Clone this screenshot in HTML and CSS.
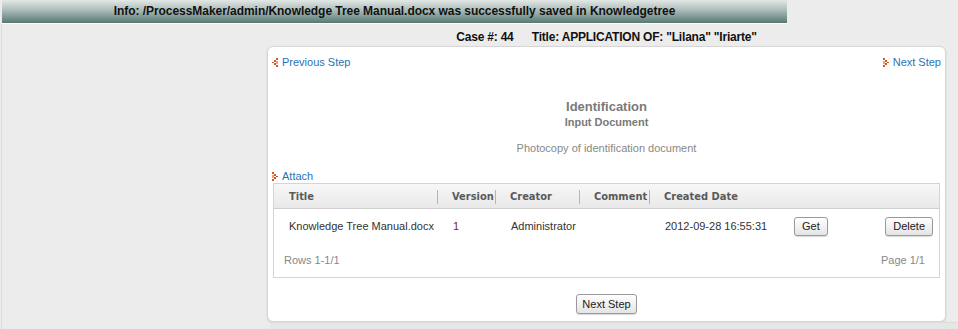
FILE: index.html
```html
<!DOCTYPE html>
<html>
<head>
  <title>Input Document</title>
  <link rel="stylesheet" href="styles.css">
</head>
<body>
  <div class="infobar">Info: /ProcessMaker/admin/Knowledge Tree Manual.docx was successfully saved in Knowledgetree</div>

  <div class="page">
    <div class="main">
      <div class="casebar">
        <span>Case #: 44</span>
        <span>Title: APPLICATION OF: "Lilana" "Iriarte"</span>
      </div>

      <div class="panel">
        <div class="steps">
          <a href="#" class="steplink">
            <svg class="arrow" width="6" height="9" viewBox="0 0 6 9"><g fill="#d9541e"><rect x="4" y="0" width="2" height="2"/><rect x="2" y="2" width="2" height="2"/><rect x="0" y="4" width="2" height="1"/><rect x="2" y="5" width="2" height="2"/><rect x="4" y="7" width="2" height="2"/><rect x="4" y="3" width="2" height="3" fill="#f0a070"/></g></svg>
            Previous Step
          </a>
          <a href="#" class="steplink">
            <svg class="arrow" width="6" height="9" viewBox="0 0 6 9"><g fill="#d9541e"><rect x="0" y="0" width="2" height="2"/><rect x="2" y="2" width="2" height="2"/><rect x="4" y="4" width="2" height="1"/><rect x="2" y="5" width="2" height="2"/><rect x="0" y="7" width="2" height="2"/><rect x="0" y="3" width="2" height="3" fill="#f0a070"/></g></svg>
            Next Step
          </a>
        </div>

        <div class="doc-head">
          <div class="doc-title">Identification</div>
          <div class="doc-sub">Input Document</div>
        </div>
        <div class="doc-desc">Photocopy of identification document</div>

        <a href="#" class="steplink attach">
          <svg class="arrow" width="6" height="9" viewBox="0 0 6 9"><g fill="#d9541e"><rect x="0" y="0" width="2" height="2"/><rect x="2" y="2" width="2" height="2"/><rect x="4" y="4" width="2" height="1"/><rect x="2" y="5" width="2" height="2"/><rect x="0" y="7" width="2" height="2"/><rect x="0" y="3" width="2" height="3" fill="#f0a070"/></g></svg>
          Attach
        </a>

        <div class="grid">
          <div class="grid-head">
            <div class="hcell c1">Title</div>
            <div class="hcell c2">Version</div>
            <div class="hcell c3">Creator</div>
            <div class="hcell c4">Comment</div>
            <div class="hcell c5 nosep">Created Date</div>
            <div class="hcell nosep"></div>
            <div class="hcell nosep"></div>
          </div>
          <div class="grid-row">
            <div class="cell c1">Knowledge Tree Manual.docx</div>
            <div class="cell c2 version">1</div>
            <div class="cell c3">Administrator</div>
            <div class="cell c4"></div>
            <div class="cell c5">2012-09-28 16:55:31</div>
            <div class="cell get"><button class="btn">Get</button></div>
            <div class="cell del"><button class="btn">Delete</button></div>
          </div>
          <div class="grid-foot">
            <span>Rows 1-1/1</span>
            <span>Page 1/1</span>
          </div>
        </div>

        <div class="actions">
          <button class="btn btn-next">Next Step</button>
        </div>
      </div>
      <div class="underband"></div>
    </div>
  </div>
</body>
</html>
```

FILE: styles.css
```css
body {
  margin: 0;
  background: #ececec;
  font-family: 'Liberation Sans', Arial, sans-serif;
  font-size: 11px;
  color: #333;
}

.infobar {
  margin-left: 2px;
  width: 785px;
  height: 23px;
  line-height: 23px;
  background: linear-gradient(#e3e8e6, #a9bbb8 45%, #587874);
  border-bottom: 1px solid #fff;
  text-align: center;
  font-weight: bold;
  font-size: 12px;
  color: #111;
  letter-spacing: -0.05px;
}

.page {
  border-left: 1px solid #dcdcdc;
  margin-left: 1px;
}

.main {
  margin-left: 265px;
  width: 679px;
}

.casebar {
  height: 22px;
  line-height: 26px;
  text-align: center;
  font-weight: bold;
  font-size: 12px;
  color: #111;
  letter-spacing: -0.2px;
}

.casebar span + span {
  margin-left: 15px;
}

.panel {
  background: #fff;
  border: 1px solid #d6d6d6;
  border-radius: 6px;
  box-shadow: 0 1px 2px rgba(0, 0, 0, 0.12);
  height: 274px;
  padding: 0 4px 0 4px;
}

.underband {
  height: 6px;
  margin-left: 4px;
  margin-right: -20px;
  border-top: 1px solid #dddddd;
  background: #e6e6e6;
}

.steps {
  display: flex;
  justify-content: space-between;
  padding: 8px 0 0 0;
  line-height: 14px;
}

.steplink {
  display: inline-flex;
  align-items: center;
  color: #2a72b5;
  text-decoration: none;
  font-size: 11px;
  line-height: 14px;
}

.arrow {
  margin-right: 4px;
}

.doc-head {
  margin-top: 30px;
  text-align: center;
  color: #7a7a7a;
  font-weight: bold;
}

.doc-title {
  font-size: 13px;
  line-height: 16px;
}

.doc-sub {
  font-size: 11px;
  line-height: 14px;
}

.doc-desc {
  margin-top: 12px;
  text-align: center;
  color: #888;
  line-height: 14px;
}

.attach {
  margin-top: 14px;
}

.grid {
  margin: 0 0 0 1px;
  width: 665px;
  border: 1px solid #d4d4d4;
}

.grid-head,
.grid-row {
  display: grid;
  grid-template-columns: 164px 58px 84px 70px 140px 1fr auto;
}

.grid-head {
  background: linear-gradient(#f7f7f7, #e9e9e9);
  border-bottom: 1px solid #cfcfcf;
  padding: 6px 0 4px 0;
}

.hcell {
  font-family: 'DejaVu Sans Condensed', 'DejaVu Sans', sans-serif;
  font-weight: bold;
  font-size: 11px;
  color: #5a5a5a;
  line-height: 14px;
  padding-left: 14px;
  border-right: 1px solid #b5b5b5;
}

.hcell.c1 {
  padding-left: 15px;
}

.hcell.nosep {
  border-right: none;
}

.grid-row {
  height: 34px;
  align-items: center;
}

.cell {
  padding-left: 15px;
  color: #333;
}

.cell.version {
  color: #7a1a3a;
}

.cell.get {
  padding-left: 4px;
}

.cell.del {
  padding: 0 6px 0 0;
}

.grid-foot {
  display: flex;
  justify-content: space-between;
  height: 34px;
  align-items: center;
  padding: 0 14px 0 10px;
  color: #888;
}

.btn {
  font-family: 'Liberation Sans', Arial, sans-serif;
  font-size: 11px;
  color: #222;
  height: 19px;
  padding: 0 7px;
  border: 1px solid #9a9a9a;
  border-radius: 3px;
  background: linear-gradient(#ffffff, #e4e4e4);
  box-shadow: 0 1px 1px rgba(0, 0, 0, 0.15);
}

.actions {
  display: flex;
  justify-content: center;
  margin-top: 16px;
}

.btn-next {
  height: 20px;
  width: 61px;
  padding: 0;
}
```
